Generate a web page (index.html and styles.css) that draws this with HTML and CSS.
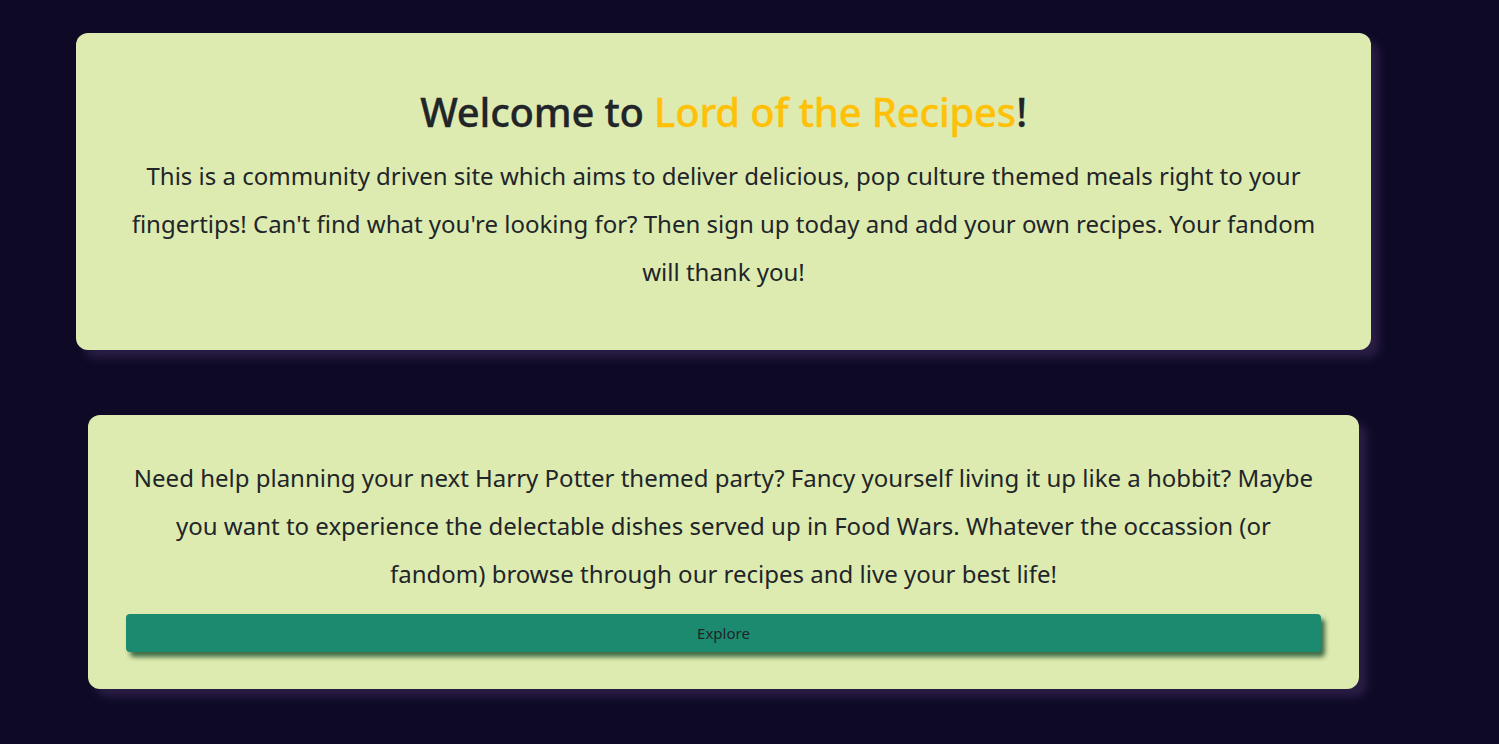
FILE: index.html
```html
<!DOCTYPE html>
<html>
<head>
<meta charset="utf-8">
<link rel="stylesheet" href="styles.css">
</head>
<body>
<main class="page">
  <section class="card card-welcome">
    <h1 class="title">Welcome to <span class="brand">Lord of the Recipes</span>!</h1>
    <p class="lead">This is a community driven site which aims to deliver delicious, pop culture themed meals right to your fingertips! Can't find what you're looking for? Then sign up today and add your own recipes. Your fandom will thank you!</p>
  </section>
  <section class="card card-explore">
    <p class="lead">Need help planning your next Harry Potter themed party? Fancy yourself living it up like a hobbit? Maybe you want to experience the delectable dishes served up in Food Wars. Whatever the occassion (or fandom) browse through our recipes and live your best life!</p>
    <button class="btn">Explore</button>
  </section>
</main>
</body>
</html>
```
FILE: styles.css
```css
html, body {
  margin: 0;
  padding: 0;
  background: #0e0a26;
  height: 100%;
}
body {
  font-family: "Noto Sans", "Open Sans", sans-serif;
  color: #212529;
}
.page {
  display: flex;
  flex-direction: column;
  align-items: flex-start;
  padding-top: 33px;
}
.card {
  background: #deebb0;
  border-radius: 12px;
  box-shadow: 8px 8px 8px #2a1d44;
  box-sizing: border-box;
  text-align: center;
}
.card-welcome {
  margin-left: 76px;
  width: 1295px;
  padding: 55px 50px 54px;
}
.card-explore {
  margin-left: 88px;
  margin-top: 65px;
  width: 1271px;
  padding: 39px 38px 37px;
}
.title {
  margin: 0 0 16px;
  font-size: 40px;
  font-weight: 500;
  letter-spacing: -0.2px;
  line-height: 48px;
  -webkit-text-stroke: 0.3px currentColor;
}
.brand {
  color: #ffc107;
}
.lead {
  margin: 0;
  font-size: 24px;
  line-height: 48px;
}
.btn {
  display: block;
  width: 100%;
  margin-top: 16px;
  height: 38px;
  border: none;
  border-radius: 4px;
  background: #1b8a6f;
  color: #212529;
  font-family: "Noto Sans", "Open Sans", sans-serif;
  font-size: 15px;
  box-shadow: 4px 5px 5px #3d6b45;
}
```
